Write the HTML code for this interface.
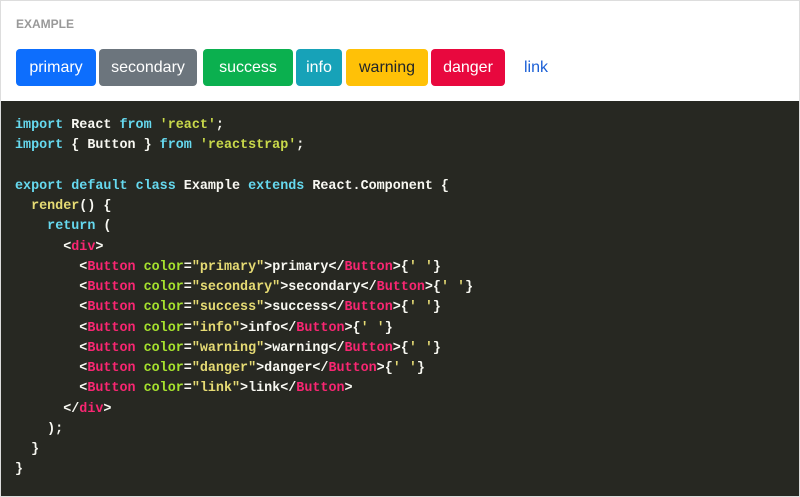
<!DOCTYPE html>
<html><head><style>
body{margin:0;width:800px;height:497px;overflow:hidden;background:#fff;font-family:"Liberation Sans",sans-serif}
.wrap{position:absolute;left:0;top:0;width:798px;height:495px;border:1px solid #ddd}
.ex{position:absolute;left:15px;top:16px;font-size:12px;font-weight:bold;color:#999}
.b{position:absolute;top:48px;height:37px;line-height:37px;border-radius:4px;color:#fff;font-size:16px;text-align:center}
pre{position:absolute;left:0;top:100px;width:798px;height:395px;margin:0;background:#272822;color:#f8f8f2;font-family:"Liberation Mono",monospace;font-size:13.4px;line-height:20.25px;padding:15px 0 0 14px;box-sizing:border-box;font-weight:bold}
.k{color:#66d9ef}.s{color:#c9d94a}.q{color:#e6db74}.t{color:#f92672}.a{color:#a6e22e}.f{color:#e6db74}
</style></head><body><div class="wrap">
<div class="ex">EXAMPLE</div>
<div class="b" style="left:15px;width:80px;background:#0d6efd">primary</div>
<div class="b" style="left:98px;width:98px;background:#6c757d">secondary</div>
<div class="b" style="left:202px;width:90px;background:#0bb04f">success</div>
<div class="b" style="left:295px;width:46px;background:#17a2b8">info</div>
<div class="b" style="left:345px;width:82px;background:#ffc107;color:#212529">warning</div>
<div class="b" style="left:430px;width:74px;background:#e8083e">danger</div>
<div class="b" style="left:515px;width:40px;color:#1a5fd6">link</div>
<pre><span class="k">import</span> React <span class="k">from</span> <span class="s">'react'</span>;
<span class="k">import</span> { Button } <span class="k">from</span> <span class="s">'reactstrap'</span>;

<span class="k">export</span> <span class="k">default</span> <span class="k">class</span> Example <span class="k">extends</span> React.Component {
  <span class="f">render</span>() {
    <span class="k">return</span> (
      &lt;<span class="t">div</span>&gt;
        &lt;<span class="t">Button</span> <span class="a">color</span>=<span class="q">"primary"</span>&gt;primary&lt;/<span class="t">Button</span>&gt;{<span class="q">' '</span>}
        &lt;<span class="t">Button</span> <span class="a">color</span>=<span class="q">"secondary"</span>&gt;secondary&lt;/<span class="t">Button</span>&gt;{<span class="q">' '</span>}
        &lt;<span class="t">Button</span> <span class="a">color</span>=<span class="q">"success"</span>&gt;success&lt;/<span class="t">Button</span>&gt;{<span class="q">' '</span>}
        &lt;<span class="t">Button</span> <span class="a">color</span>=<span class="q">"info"</span>&gt;info&lt;/<span class="t">Button</span>&gt;{<span class="q">' '</span>}
        &lt;<span class="t">Button</span> <span class="a">color</span>=<span class="q">"warning"</span>&gt;warning&lt;/<span class="t">Button</span>&gt;{<span class="q">' '</span>}
        &lt;<span class="t">Button</span> <span class="a">color</span>=<span class="q">"danger"</span>&gt;danger&lt;/<span class="t">Button</span>&gt;{<span class="q">' '</span>}
        &lt;<span class="t">Button</span> <span class="a">color</span>=<span class="q">"link"</span>&gt;link&lt;/<span class="t">Button</span>&gt;
      &lt;/<span class="t">div</span>&gt;
    );
  }
}</pre>
</div></body></html>
